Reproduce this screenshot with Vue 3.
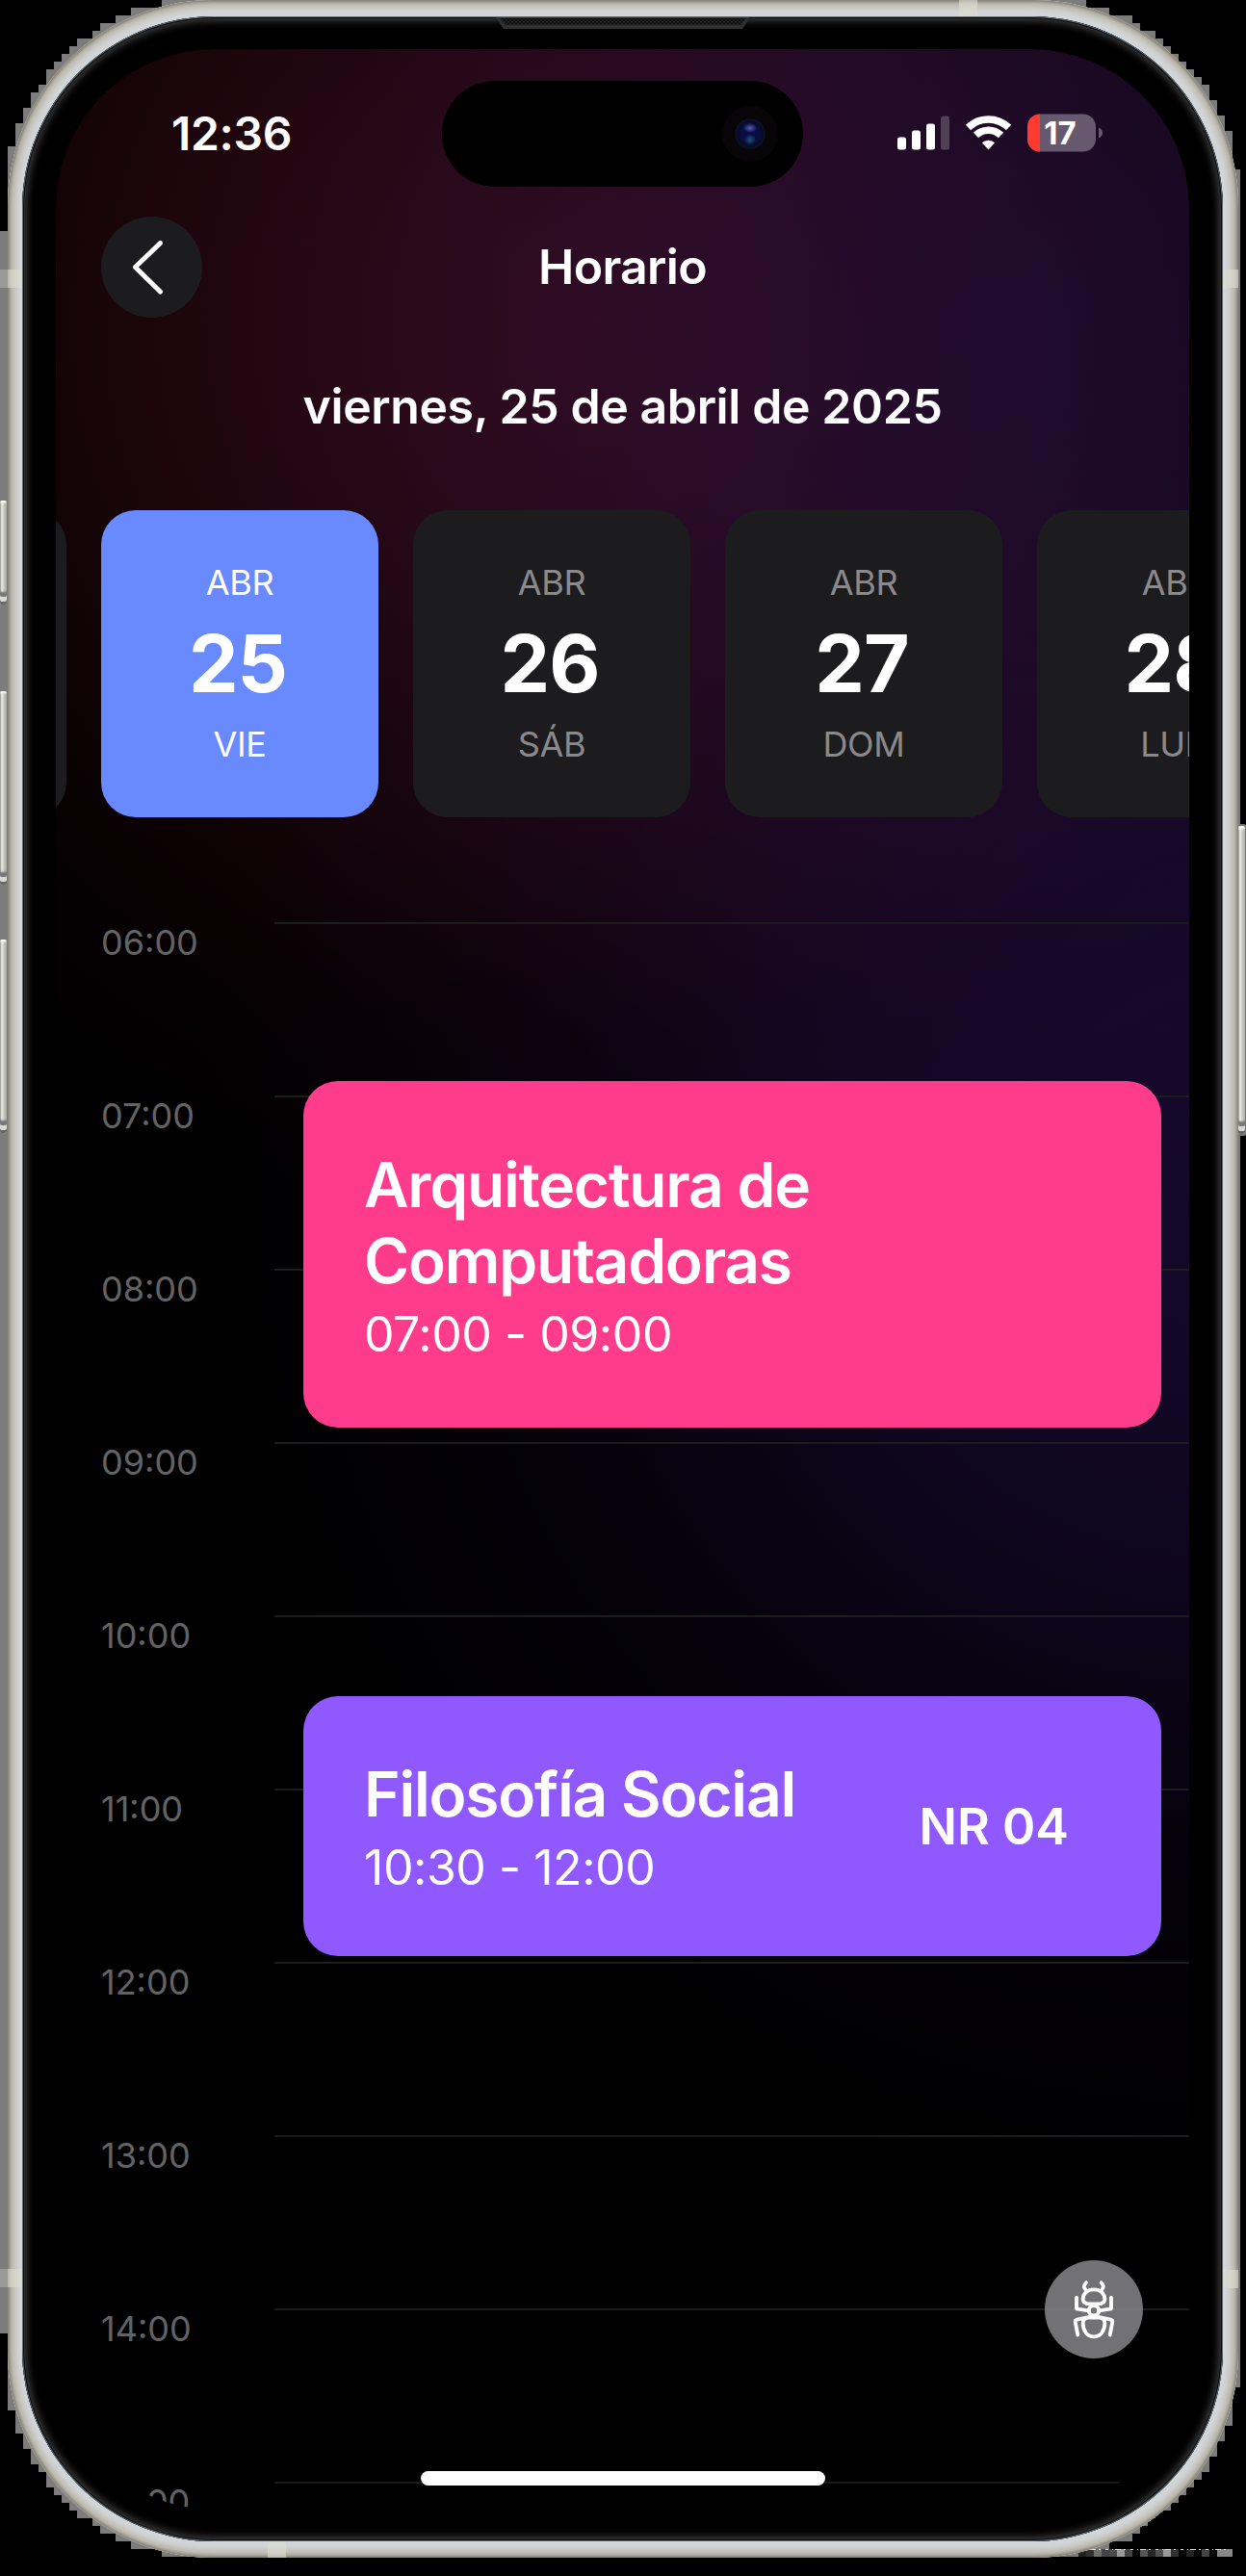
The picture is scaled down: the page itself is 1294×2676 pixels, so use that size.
<script setup>
const days = [
  { month: 'ABR', day: 25, name: 'VIE', active: true },
  { month: 'ABR', day: 26, name: 'SÁB' },
  { month: 'ABR', day: 27, name: 'DOM' },
  { month: 'ABR', day: 28, name: 'LUN' },
]

const hours = ['06:00', '07:00', '08:00', '09:00', '10:00', '11:00', '12:00', '13:00', '14:00', '15:00']

const events = [
  { title: 'Arquitectura de Computadoras', time: '07:00 - 09:00', room: '', tone: 'pink', top: 165, height: 360 },
  { title: 'Filosofía Social', time: '10:30 - 12:00', room: 'NR 04', tone: 'violet', top: 804, height: 270 },
]

// Pixel steps of the halo around the phone body
const halo =
  '168,0 168,8 136,8 136,16 120,16 120,24 104,24 104,32 96,32 96,40 80,40 80,48 72,48 72,56 64,56 64,64 56,64 56,72 48,72 48,88 40,88 40,96 32,96 32,112 24,112 24,128 16,128 16,152 8,152 8,240 0,240 ' +
  '0,2424 8,2424 8,2504 16,2504 16,2528 24,2528 24,2544 32,2544 32,2560 40,2560 40,2568 48,2568 48,2584 56,2584 56,2592 64,2592 64,2600 72,2600 72,2608 80,2608 80,2616 96,2616 96,2624 104,2624 104,2632 120,2632 120,2640 136,2640 136,2648 168,2648 168,2656 ' +
  '1120,2656 1120,2648 1152,2648 1152,2640 1176,2640 1176,2632 1184,2632 1184,2624 1192,2624 1192,2616 1200,2616 1200,2608 1216,2608 1216,2600 1224,2600 1224,2592 1232,2592 1232,2584 1240,2584 1240,2576 1248,2576 1248,2568 1256,2568 1256,2552 1264,2552 1264,2536 1272,2536 1272,2520 1280,2520 1280,2480 1288,2480 ' +
  '1288,176 1280,176 1280,136 1272,136 1272,120 1264,120 1264,104 1256,104 1256,88 1248,88 1248,80 1240,80 1240,72 1232,72 1232,64 1224,64 1224,56 1216,56 1216,48 1208,48 1208,40 1200,40 1200,32 1184,32 1184,24 1176,24 1176,16 1152,16 1152,8 1128,8 1128,0'

const specks = [
  [1120, '#222'], [1128, '#303030'], [1136, '#6e6e6e'], [1144, '#444'], [1152, '#4a4a4a'], [1160, '#999'], [1168, '#444'],
  [1184, '#555'], [1192, '#262626'], [1200, '#505050'], [1208, '#999'], [1216, '#303030'], [1232, '#262626'],
  [1248, '#444'], [1264, '#888'], [1272, '#888'],
]
</script>

<template>
  <div class="stage">
    <svg class="halo" viewBox="0 0 1294 2676" width="1294" height="2676">
      <polygon :points="halo" fill="#7c7c7c" />
      <rect x="0" y="280" width="10" height="19" fill="#9a9a98" />
      <rect x="0" y="2357" width="10" height="19" fill="#9a9a98" />
      <rect v-for="s in specks" :key="s[0]" :x="s[0]" y="2648" width="8" height="8" :fill="s[1]" />
      <path d="M1122 2648.500H1278" stroke="#ddd" stroke-width="1" stroke-dasharray="3 4 1 2 6 3 2 5" />
    </svg>
    <i class="key action"></i>
    <i class="key up"></i>
    <i class="key down"></i>
    <i class="key power"></i>

    <div class="device">
      <i class="band b-top"></i>
      <i class="band b-bottom"></i>
      <i class="band b-lt"></i>
      <i class="band b-rt"></i>
      <i class="band b-lb"></i>
      <i class="band b-rb"></i>
      <div class="glass">
        <svg class="speaker" viewBox="0 0 264 16" width="264" height="16">
          <defs>
            <pattern id="mesh" width="4" height="4" patternUnits="userSpaceOnUse">
              <rect width="4" height="4" fill="#101010" />
              <circle cx="1" cy="1" r="1" fill="#272727" />
              <circle cx="3" cy="3" r="1" fill="#272727" />
            </pattern>
          </defs>
          <path d="M0 0H264L256 12H8Z" fill="#303030" />
          <path d="M4 1H260L254 8H10Z" fill="url(#mesh)" />
        </svg>
        <main class="screen">
          <header class="status">
            <span class="clock">12:36</span>
            <svg class="signals" viewBox="0 0 214 40" width="214" height="40">
              <rect x="0" y="24.500" width="9" height="13" rx="2.500" fill="#fff" />
              <rect x="15" y="17.500" width="9" height="20" rx="2.500" fill="#fff" />
              <rect x="30" y="10.500" width="9" height="27" rx="2.500" fill="#fff" />
              <rect x="45" y="2.500" width="9" height="35" rx="2.500" fill="#fff" fill-opacity=".22" />
              <g fill="none" stroke="#fff" stroke-width="7.500">
                <path d="M73.500 14.500A30 30 0 0 1 115.500 14.500" />
                <path d="M81.500 22.500A18.500 18.500 0 0 1 107.500 22.500" />
              </g>
              <path d="M94.500 37.500L87.800 30.300A9.800 9.800 0 0 1 101.200 30.300Z" fill="#fff" />
              <clipPath id="cell"><rect x="135" y=".5" width="71" height="39" rx="13" /></clipPath>
              <g clip-path="url(#cell)">
                <rect x="135" y="0" width="71" height="40" fill="#66586f" />
                <rect x="135" y="0" width="13" height="40" fill="#ff3b30" />
              </g>
              <path d="M209 14.500Q213 16.500 213 20T209 25.500Z" fill="#66586f" />
              <text x="169" y="32" text-anchor="middle" class="charge">17</text>
            </svg>
          </header>

          <div class="island"><i class="lens"></i></div>

          <nav class="bar">
            <button class="back" aria-label="Volver">
              <svg viewBox="0 0 105 105" width="105" height="105">
                <path d="M61.500 27.500L35.500 52.500L61.500 78" fill="none" stroke="#fff" stroke-width="5" stroke-linecap="round" stroke-linejoin="round" />
              </svg>
            </button>
            <h1>Horario</h1>
          </nav>

          <h2 class="date">viernes, 25 de abril de 2025</h2>

          <section class="days">
            <div class="day"></div>
            <div v-for="d in days" :key="d.day" class="day" :class="{ active: d.active }">
              <span class="small">{{ d.month }}</span>
              <strong>{{ d.day }}</strong>
              <span class="small">{{ d.name }}</span>
            </div>
          </section>

          <section class="timeline">
            <div v-for="h in hours" :key="h" class="hour">
              <time>{{ h }}</time>
              <div class="rule"></div>
            </div>
            <article
              v-for="e in events"
              :key="e.title"
              class="event"
              :class="e.tone"
              :style="{ top: e.top + 'px', height: e.height + 'px' }"
            >
              <div class="info">
                <h3>{{ e.title }}</h3>
                <p>{{ e.time }}</p>
              </div>
              <span v-if="e.room" class="room">{{ e.room }}</span>
            </article>
          </section>

          <button class="bug" aria-label="Reportar">
            <svg viewBox="0 0 306 306" width="102" height="102" fill="none" stroke="#fff" stroke-width="11.500" stroke-linecap="round" stroke-linejoin="round">
              <path d="M129 70C121 77 120 85 127 91M176 70C184 77 185 85 178 91" />
              <path d="M153 91C132 91 119 105 119 120C119 131 127 136 138 136H168C179 136 187 131 187 120C187 105 174 91 153 91Z" />
              <circle cx="153" cy="157" r="15.500" />
              <path d="M138 179H168C179 179 187 184 187 196C187 220 174 238 153 238C132 238 119 220 119 196C119 184 127 179 138 179Z" />
              <path d="M99 116V151L136 157M207 116V151L170 157" />
              <path d="M103 233L95 192Q95 187 101 185L136 177M203 233L211 192Q211 187 205 185L170 177" />
            </svg>
          </button>
          <i class="home"></i>
        </main>
      </div>
    </div>
  </div>
</template>

<style>
body {
  background: #000;
}
</style>

<style scoped>
.stage {
  position: relative;
  width: 1294px;
  height: 2676px;
  overflow: hidden;
  background: #000;
  font-family: Inter, "Liberation Sans", sans-serif;
  color: #fff;
}
.halo {
  position: absolute;
  inset: 0;
}
.device {
  position: relative;
  box-sizing: border-box;
  width: 1278px;
  height: 2657px;
  margin-left: 8px;
  padding: 17px 16px 17px 15px;
  border-radius: 214px;
  background: #d2d6d9;
  box-shadow: inset 0 0 3px 2px #858177, inset 0 0 5px 6px #b8b5ab, inset 0 0 5px 10px #cbcac4;
  overflow: hidden;
}
.band {
  position: absolute;
  background: #dcddd0;
  opacity: .6;
}
.b-top { left: 988px; top: 0; width: 19px; height: 18px; }
.b-bottom { left: 270px; bottom: 0; width: 19px; height: 18px; }
.b-lt { left: 0; top: 280px; width: 16px; height: 19px; }
.b-rt { right: 0; top: 280px; width: 17px; height: 19px; }
.b-lb { left: 0; top: 2357px; width: 16px; height: 19px; }
.b-rb { right: 0; top: 2358px; width: 17px; height: 19px; }
.glass {
  position: relative;
  box-sizing: border-box;
  width: 1247px;
  height: 2623px;
  padding: 34px 35px;
  border-radius: 200px;
  background: #000;
  box-shadow: inset 0 0 0 1px #5d6b74, inset 0 0 0 2px #05080a, inset 0 0 9px 4px #444;
}
.speaker {
  position: absolute;
  left: 492px;
  top: 1px;
}
.key {
  position: absolute;
  left: 0;
  width: 7px;
  border-radius: 2px;
  background: linear-gradient(90deg, #77766f, #f2f2ec 25%, #c8c7bd 60%, #aaa89e);
  box-shadow: inset 0 -3px 0 #666, inset 0 -8px 0 #d8d8d4, inset 0 -13px 2px #777, inset 0 2px 2px #fff;
}
.action { top: 520px; height: 108px; }
.up { top: 718px; height: 201px; }
.down { top: 976px; height: 201px; }
.power { left: 1286px; top: 858px; height: 320px; box-shadow: 0 0 0 2px #777, inset 0 -3px 0 #666, inset 0 -8px 0 #d8d8d4, inset 0 -13px 2px #777, inset 0 3px 3px #fff; }

.screen {
  position: relative;
  width: 1177px;
  height: 2556px;
  border-radius: 165px;
  overflow: hidden;
  background:
    radial-gradient(ellipse 900px 1150px at 1000px 300px, rgba(32, 14, 64, .6), rgba(36, 15, 64, .44) 35%, rgba(32, 11, 56, .28) 60%, rgba(20, 6, 36, .12) 82%, transparent),
    radial-gradient(ellipse 950px 960px at 560px 280px, rgba(68, 14, 30, .8), rgba(60, 12, 26, .68) 30%, rgba(52, 10, 20, .45) 55%, rgba(30, 4, 10, .24) 78%, transparent),
    radial-gradient(ellipse 1050px 1080px at 1200px 1160px, rgba(22, 9, 46, .95), rgba(19, 8, 40, .8) 35%, rgba(11, 4, 24, .42) 68%, transparent),
    #000;
}
.status {
  display: flex;
  align-items: center;
  justify-content: space-between;
  height: 174px;
  box-sizing: border-box;
  padding: 0 89px 0 120px;
}
.clock {
  font-size: 48px;
  font-weight: 600;
  letter-spacing: -.3px;
}
.charge {
  font-size: 33px;
  font-weight: 700;
  fill: #fff;
}
.island {
  position: absolute;
  left: 401px;
  top: 33px;
  width: 375px;
  height: 110px;
  border-radius: 55px;
  background: #000;
}
.lens {
  position: absolute;
  left: 291px;
  top: 26px;
  width: 58px;
  height: 58px;
  border-radius: 50%;
  background:
    radial-gradient(ellipse 7px 5px at 29px 23px, #5d5cb0, transparent),
    radial-gradient(ellipse 6px 6px at 29px 35px, #1d5276, transparent),
    radial-gradient(circle at 29px 29px, #080a40 0, #0a0f48 8px, #080a26 13px, #0c1228 15px, #070508 16.500px);
}
.bar {
  display: grid;
  grid-template-columns: 105px 1fr 105px;
  align-items: center;
  height: 105px;
  padding: 0 47px;
}
.back {
  display: block;
  width: 105px;
  height: 105px;
  padding: 0;
  border: 0;
  border-radius: 50%;
  background: #1c1c1e;
}
.back svg, .bug svg {
  display: block;
}
h1, h2, h3, p {
  margin: 0;
}
h1 {
  text-align: center;
  font-size: 50px;
  font-weight: 600;
  line-height: 60px;
  letter-spacing: -.7px;
  padding-bottom: 1px;
}
.date {
  height: 184px;
  margin-bottom: 16px;
  line-height: 184px;
  text-align: center;
  font-size: 50px;
  font-weight: 600;
  letter-spacing: -.4px;
}
.days {
  display: flex;
  gap: 36px;
  margin-left: -277px;
}
.day {
  flex: none;
  display: flex;
  flex-direction: column;
  align-items: center;
  box-sizing: border-box;
  width: 288px;
  height: 319px;
  padding-top: 53px;
  border-radius: 36px;
  background: #1c1c1e;
}
.day.active {
  background: #6989ff;
}
.small {
  font-size: 36px;
  line-height: 44px;
  letter-spacing: -.3px;
  color: #8a8a8d;
}
.active .small {
  color: #fff;
}
.day strong {
  padding-top: 2px;
  font-size: 82px;
  font-weight: 700;
  line-height: 122px;
  letter-spacing: -1px;
  margin-right: 4px;
}
.timeline {
  position: relative;
  margin-top: 109px;
}
.hour {
  display: flex;
  height: 180px;
  padding-left: 47px;
}
.hour time {
  width: 180px;
  font-size: 36px;
  line-height: 43px;
  color: #636366;
}
.rule {
  flex: 1;
  border-top: 2px solid #1c1c1e;
}
.event {
  position: absolute;
  left: 257px;
  width: 891px;
  box-sizing: border-box;
  display: flex;
  align-items: center;
  justify-content: space-between;
  padding: 0 96px 0 63px;
  border-radius: 36px;
}
.pink { background: #ff3b8b; }
.violet { background: #9059ff; }
.info {
  width: 500px;
  padding-top: 8px;
}
.event h3 {
  font-size: 64px;
  font-weight: 600;
  line-height: 79px;
  letter-spacing: -1.200px;
}
.event p {
  font-size: 50px;
  line-height: 75px;
  letter-spacing: -.45px;
}
.room {
  font-size: 52px;
  font-weight: 600;
}
.bug {
  position: absolute;
  left: 1027px;
  top: 2297px;
  width: 102px;
  height: 102px;
  padding: 0;
  border: 0;
  border-radius: 50%;
  background: rgba(142, 142, 147, .8);
}
.home {
  position: absolute;
  left: 379px;
  top: 2516px;
  width: 420px;
  height: 15px;
  border-radius: 8px;
  background: #fff;
}
</style>
